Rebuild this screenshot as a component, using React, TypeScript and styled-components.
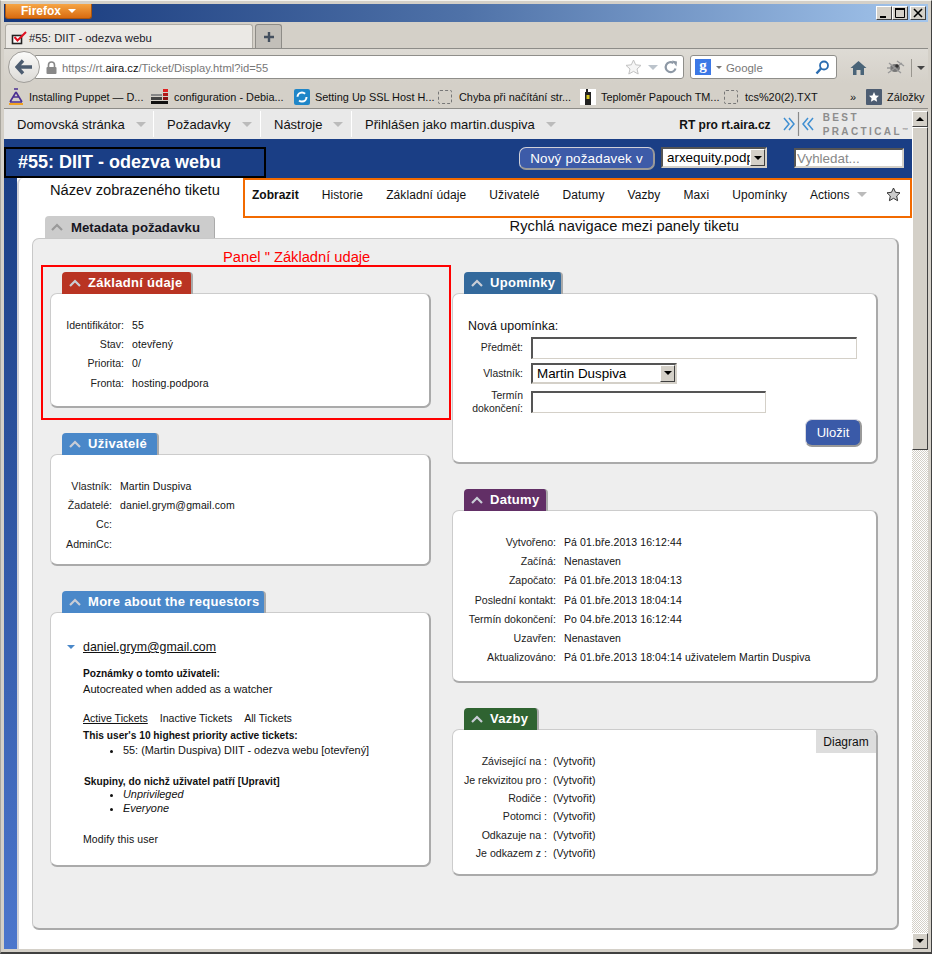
import React from 'react';
import styled, { createGlobalStyle } from 'styled-components';

const GlobalStyle = createGlobalStyle`
  html, body {
    margin: 0;
    padding: 0;
    overflow: hidden;
    background: #d4d0c8;
  }
  * {
    box-sizing: border-box;
  }
`;

const Window = styled.div`
  width: 932px;
  height: 954px;
  padding: 3px 3px 3px 3px;
  display: flex;
  flex-direction: column;
  background: #d4d0c8;
  border-right: 1px solid #404040;
  border-bottom: 2px solid #404040;
  border-top: 1px solid #f4f3ef;
  border-left: 1px solid #a9a69e;
  font-family: "Liberation Sans", Arial, sans-serif;
  color: #111;
  overflow: hidden;
`;

const TitleBar = styled.div`
  height: 18px;
  flex: none;
  display: flex;
  justify-content: space-between;
  background: linear-gradient(90deg, #16387c 0%, #4f72a8 50%, #a3c5ec 100%);
`;

const FirefoxButton = styled.div`
  width: 87px;
  height: 15px;
  margin-left: 1px;
  display: flex;
  align-items: center;
  justify-content: center;
  gap: 7px;
  color: #fff;
  font-size: 12px;
  font-weight: bold;
  background: linear-gradient(#f6a544, #d96b10);
  border: 1px solid #a9540f;
  border-top: none;
  border-radius: 0 0 3px 3px;
`;

const SmallArrow = styled.span<{ $color: string; $w?: number }>`
  display: inline-block;
  width: 0;
  height: 0;
  flex: none;
  border-left: ${(p) => p.$w || 4}px solid transparent;
  border-right: ${(p) => p.$w || 4}px solid transparent;
  border-top: ${(p) => p.$w || 4}px solid ${(p) => p.$color};
`;

const WindowButtons = styled.div`
  display: flex;
  margin-top: 2px;
  margin-right: 2px;
`;

const WindowButton = styled.div<{ $gap?: boolean }>`
  width: 16px;
  height: 14px;
  margin-left: ${(p) => (p.$gap ? 2 : 0)}px;
  background: #d4d0c8;
  border: 1px solid;
  border-color: #fff #404040 #404040 #fff;
  display: flex;
  align-items: center;
  justify-content: center;
`;

const TabStrip = styled.div`
  height: 26px;
  flex: none;
  display: flex;
  align-items: flex-end;
  padding-left: 1px;
  gap: 2px;
`;

const BrowserTab = styled.div`
  width: 248px;
  height: 24px;
  padding: 2px 0 0 5px;
  display: flex;
  align-items: center;
  font-size: 11.3px;
  color: #1b1b2b;
  background: #ebe9e5;
  border: 1px solid #b0ada6;
  border-bottom: none;
  border-radius: 3px 3px 0 0;
`;

const NewTab = styled.div`
  width: 27px;
  height: 24px;
  display: flex;
  align-items: center;
  justify-content: center;
  background: #c2bfb9;
  border: 1px solid #8e8c87;
  border-bottom: none;
  border-radius: 3px 3px 0 0;
`;

const NavBar = styled.div`
  height: 35px;
  flex: none;
  padding: 2px 0 0 4px;
  display: flex;
  align-items: flex-start;
  background: linear-gradient(#dedbd5, #d4d0c8);
  border-top: 1px solid #8d8c88;
`;

const BackButton = styled.div`
  width: 32px;
  height: 32px;
  margin-right: -5px;
  z-index: 1;
  flex: none;
  border-radius: 50%;
  background: linear-gradient(#fbfbfa, #dcdad6);
  border: 1px solid #a09e9a;
  display: flex;
  align-items: center;
  justify-content: center;
`;

const UrlBox = styled.div`
  width: 649px;
  height: 24px;
  margin-top: 4px;
  padding: 0 5px 0 10px;
  display: flex;
  align-items: center;
  background: #fff;
  border: 1px solid #8f8e8a;
  border-radius: 0 3px 3px 0;
  font-size: 11.2px;
  color: #777;
  flex: none;
`;

const UrlHost = styled.span`
  color: #111;
`;

const UrlText = styled.div`
  flex: 1;
  margin: 2px 0 0 5px;
`;

const UrlIcons = styled.div`
  display: flex;
  align-items: center;
  gap: 6px;
`;

const SearchBox = styled.div`
  width: 147px;
  height: 24px;
  margin-top: 4px;
  margin-left: 6px;
  flex: none;
  padding: 0 7px 0 4px;
  display: flex;
  align-items: center;
  background: #fff;
  border: 1px solid #8f8e8a;
  border-radius: 3px;
  font-size: 11.4px;
  color: #777;
`;

const GoogleIcon = styled.div`
  width: 16px;
  height: 16px;
  background: #3c78e6;
  color: #fff;
  font-family: "Liberation Serif", serif;
  font-weight: bold;
  font-size: 15px;
  line-height: 13px;
  text-align: center;
  margin-right: 5px;
`;

const SearchLabel = styled.div`
  flex: 1;
  margin: 2px 0 0 4px;
`;

const ToolIcons = styled.div`
  display: flex;
  align-items: center;
  margin-top: 5px;
  height: 24px;
`;

const ToolDivider = styled.div`
  width: 1px;
  height: 18px;
  margin: 0 5px 0 6px;
  background: #99968f;
`;

const Bookmarks = styled.div`
  height: 26px;
  flex: none;
  padding: 3px 0 0 4px;
  display: flex;
  align-items: center;
  font-size: 10.9px;
  color: #111;
  border-bottom: 1px solid #8d8c88;
`;

const Bookmark = styled.div<{ $width: number }>`
  width: ${(p) => p.$width}px;
  flex: none;
  display: flex;
  align-items: center;
  gap: 5px;
  white-space: nowrap;
`;

const DashedIcon = styled.span`
  width: 14px;
  height: 14px;
  margin-right: 2px;
  flex: none;
  border: 1px dashed #777;
  border-radius: 2px;
`;

const Chevrons = styled.div`
  margin-left: 31px;
  width: 16px;
  font-size: 11px;
`;

const Viewport = styled.div`
  flex: 1;
  min-height: 0;
  display: flex;
`;

const Page = styled.div`
  width: 908px;
  flex: none;
  display: flex;
  flex-direction: column;
  background: #fff;
`;

const Scrollbar = styled.div`
  width: 16px;
  flex: none;
  display: flex;
  flex-direction: column;
  border-top: 2px solid #d4d0c8;
  background: repeating-conic-gradient(#d4d0c8 0 25%, #fff 0 50%) 0 0 / 2px 2px;
`;

const ScrollButton = styled.div`
  height: 16px;
  flex: none;
  display: flex;
  align-items: center;
  justify-content: center;
  background: #d4d0c8;
  border: 1px solid;
  border-color: #fff #404040 #404040 #fff;
`;

const UpArrow = styled.span`
  width: 0;
  height: 0;
  border-left: 4px solid transparent;
  border-right: 4px solid transparent;
  border-bottom: 4px solid #000;
`;

const ScrollThumb = styled.div`
  height: 323px;
  flex: none;
  background: #d4d0c8;
  border: 1px solid;
  border-color: #fff #404040 #404040 #fff;
`;

const ScrollSpace = styled.div`
  flex: 1;
`;

const MenuBar = styled.div`
  height: 30px;
  flex: none;
  display: flex;
  align-items: center;
  background: #e9e9e9;
  font-size: 13px;
`;

const MenuItem = styled.div<{ $width: number }>`
  width: ${(p) => p.$width}px;
  height: 26px;
  flex: none;
  padding: 1px 0 0 13px;
  display: flex;
  align-items: center;
  gap: 11px;
  border-right: 1px solid #fff;
  white-space: nowrap;
  &:nth-child(4) {
    border-right: none;
  }
`;

const MenuSpacer = styled.div`
  flex: 1;
`;

const SiteName = styled.div`
  font-size: 12px;
  font-weight: bold;
  margin: 2px 12px 0 0;
`;

const LogoRow = styled.div`
  display: flex;
  align-items: center;
  margin-right: 4px;
`;

const LogoText = styled.div`
  margin-left: 8px;
  padding-top: 2px;
  font-size: 10px;
  line-height: 12px;
  letter-spacing: 2.4px;
  color: #8d8d8d;
  font-weight: bold;
  white-space: nowrap;
`;

const TradeMark = styled.span`
  font-size: 6px;
  letter-spacing: 0;
  vertical-align: 3px;
`;

const PageHeader = styled.div`
  height: 39px;
  flex: none;
  padding-top: 8px;
  display: flex;
  align-items: flex-start;
  background: #1a3e85;
`;

const TicketTitle = styled.h1`
  width: 262px;
  height: 31px;
  margin: 0;
  padding-left: 12px;
  flex: none;
  font-size: 18px;
  line-height: 27px;
  color: #fff;
  border: 2px solid #000;
  white-space: nowrap;
`;

const HeaderControls = styled.div`
  margin-left: 253px;
  display: flex;
  align-items: flex-start;
`;

const NewTicketButton = styled.div`
  width: 136px;
  height: 23px;
  display: flex;
  align-items: center;
  justify-content: center;
  color: #fff;
  font-size: 13.4px;
  letter-spacing: 0.2px;
  background: #3d5ba8;
  border: 1px solid #d0d0d8;
  border-right: 2px solid #999;
  border-bottom: 2px solid #999;
  border-radius: 7px;
`;

const FakeSelect = styled.div<{ $width: number; $size: number }>`
  width: ${(p) => p.$width}px;
  height: 21px;
  flex: none;
  padding-left: 4px;
  display: flex;
  align-items: center;
  justify-content: space-between;
  white-space: nowrap;
  background: #fff;
  font-size: ${(p) => p.$size}px;
  color: #000;
  border: 2px solid;
  border-color: #555 #d4d0c8 #d4d0c8 #555;
`;

const SelectText = styled.span`
  flex: 1;
  min-width: 0;
  overflow: hidden;
`;

const HeaderSelect = styled(FakeSelect)`
  margin-left: 6px;
`;

const SelectArrow = styled.span`
  width: 15px;
  height: 17px;
  flex: none;
  display: flex;
  align-items: center;
  justify-content: center;
  background: #d4d0c8;
  border: 1px solid;
  border-color: #fff #404040 #404040 #fff;
`;

const SearchInput = styled.input`
  width: 110px;
  height: 20px;
  margin: 1px 0 0 27px;
  padding: 0 1px;
  font-family: "Liberation Sans", Arial, sans-serif;
  font-size: 13.4px;
  background: #fff;
  border: 2px solid;
  border-color: #555 #d4d0c8 #d4d0c8 #555;
  outline: none;
  &::placeholder {
    color: #888;
    opacity: 1;
  }
`;

const BodyRow = styled.div`
  flex: 1;
  display: flex;
  min-height: 0;
`;

const BlueStrip = styled.div`
  width: 13px;
  flex: none;
  background: linear-gradient(#1a3e85, #4c76cc);
`;

const Sheet = styled.div`
  flex: 1;
  min-width: 0;
  background: #fff;
  border-left: 2px solid #d2d2d8;
  border-radius: 6px 0 0 0;
`;

const TopRow = styled.div`
  height: 40px;
  display: flex;
  align-items: flex-start;
  justify-content: space-between;
`;

const Caption = styled.div`
  font-size: 14.7px;
  line-height: 18px;
  color: #111;
  white-space: nowrap;
`;

const TitleCaption = styled(Caption)`
  margin: 3px 0 0 31px;
`;

const PanelNav = styled.nav`
  width: 669px;
  height: 40px;
  padding: 0 0 7px 7px;
  display: flex;
  align-items: center;
  gap: 23px;
  font-size: 12px;
  border: 2px solid #f26a00;
  white-space: nowrap;
`;

const NavLink = styled.span<{ $active?: boolean }>`
  font-weight: ${(p) => (p.$active ? 'bold' : 'normal')};
  letter-spacing: ${(p) => (p.$active ? 0 : 0.1)}px;
`;

const ActionsLink = styled.span`
  display: flex;
  align-items: center;
  gap: 8px;
  margin-right: -4px;
`;

const MetaHead = styled.div`
  height: 20px;
  display: flex;
  align-items: flex-end;
  justify-content: space-between;
`;

const MetaTab = styled.div`
  width: 170px;
  height: 22px;
  margin: 0 0 0 26px;
  padding-left: 6px;
  display: flex;
  align-items: center;
  gap: 8px;
  font-size: 13.2px;
  font-weight: bold;
  color: #15151f;
  background: #ccc;
  border-right: 1px solid #aaa;
  border-radius: 4px 4px 0 0;
  white-space: nowrap;
`;

const NavCaption = styled(Caption)`
  margin-right: 173px;
  margin-bottom: 3px;
`;

const MetaPanel = styled.div`
  width: 867px;
  margin-left: 13px;
  padding: 0 0 52px 8px;
  display: flex;
  gap: 1px;
  background: #eee;
  border: 1px solid #c8c8c8;
  border-right: 2px solid #aaa;
  border-bottom: 2px solid #aaa;
  border-radius: 7px;
`;

const LeftColumn = styled.div`
  width: 410px;
  flex: none;
  display: flex;
  flex-direction: column;
`;

const RightColumn = styled.div`
  width: 426px;
  flex: none;
  padding-top: 33px;
  display: flex;
  flex-direction: column;
  gap: 25px;
`;

const PanelCaption = styled(Caption)`
  height: 26px;
  padding: 9px 0 0 182px;
  color: #f00;
`;

const RedBox = styled.div`
  height: 155px;
  padding: 5px 18px 0 7px;
  border: 2px solid #f00;
`;

const LeftStack = styled.div`
  margin: 13px 0 0 9px;
  width: 381px;
  display: flex;
  flex-direction: column;
  gap: 25px;
`;

const WidgetTab = styled.div<{ $color: string; $width: number }>`
  position: relative;
  z-index: 1;
  width: ${(p) => p.$width}px;
  height: 22px;
  margin-left: 12px;
  padding: 0 0 1px 7px;
  display: flex;
  align-items: center;
  gap: 7px;
  color: #fff;
  font-size: 13px;
  font-weight: bold;
  letter-spacing: 0.3px;
  white-space: nowrap;
  background: ${(p) => p.$color};
  border-right: 2px solid #aaa;
  border-radius: 4px 4px 0 0;
`;

const WidgetBox = styled.div<{ $height: number }>`
  position: relative;
  height: ${(p) => p.$height}px;
  margin-top: -1px;
  background: #fff;
  border: 1px solid #ccc;
  border-right: 2px solid #aaa;
  border-bottom: 2px solid #aaa;
  border-radius: 7px;
`;

const FieldGrid = styled.div<{ $label: number; $gap: number; $top: number; $pitch: number }>`
  padding-top: ${(p) => p.$top}px;
  display: grid;
  grid-template-columns: ${(p) => p.$label}px auto;
  column-gap: ${(p) => p.$gap}px;
  grid-auto-rows: ${(p) => p.$pitch}px;
  align-items: center;
  justify-content: start;
`;

const FieldLabel = styled.div`
  text-align: right;
  font-size: 10.6px;
  color: #222;
  white-space: nowrap;
`;

const FieldValue = styled.div`
  font-size: 10.5px;
  letter-spacing: 0.1px;
  color: #111;
  white-space: nowrap;
`;

const ReminderBody = styled.div`
  padding: 24px 0 0 15px;
`;

const ReminderTitle = styled.div`
  font-size: 12.4px;
  line-height: 16px;
  margin-bottom: 1px;
`;

const ReminderRow = styled.div<{ $height: number }>`
  height: ${(p) => p.$height}px;
  display: flex;
  align-items: center;
`;

const ReminderLabel = styled.div`
  width: 55px;
  margin-right: 8px;
  flex: none;
  text-align: right;
  font-size: 10.4px;
  line-height: 13px;
  color: #222;
`;

const TextField = styled.input<{ $width: number }>`
  width: ${(p) => p.$width}px;
  height: 22px;
  padding: 0;
  background: #fff;
  border: 2px solid;
  border-color: #555 #d4d0c8 #d4d0c8 #555;
  border-right-width: 1px;
  border-bottom-width: 1px;
  outline: none;
`;

const SaveRow = styled.div`
  margin: 2px 14px 0 0;
  display: flex;
  justify-content: flex-end;
`;

const SaveButton = styled.div`
  width: 57px;
  height: 28px;
  display: flex;
  align-items: center;
  justify-content: center;
  color: #fff;
  font-size: 13px;
  background: #3a5aa8;
  border: 1px solid #d8d8e0;
  border-right: 2px solid #999;
  border-bottom: 2px solid #999;
  border-radius: 7px;
`;

const DiagramTab = styled.div`
  position: absolute;
  top: 0;
  right: 0;
  width: 60px;
  height: 23px;
  display: flex;
  align-items: center;
  justify-content: center;
  font-size: 12px;
  background: #ddd;
  border-radius: 0 6px 0 0;
`;

const RequestorBody = styled.div`
  position: relative;
  padding: 26px 0 0 32px;
`;

const ToggleMark = styled.span`
  position: absolute;
  left: 16px;
  top: 22px;
`;

const RequestorLink = styled.a`
  display: block;
  font-size: 12.4px;
  line-height: 16px;
  color: #111;
  text-decoration: underline;
  margin-bottom: 11px;
`;

const SmallBold = styled.div<{ $left?: number }>`
  font-size: 10.2px;
  font-weight: bold;
  line-height: 15px;
  color: #111;
  margin-left: ${(p) => p.$left || 0}px;
`;

const SmallText = styled.div`
  font-size: 11.1px;
  line-height: 16px;
  color: #111;
  margin-bottom: 13px;
`;

const TicketTabs = styled.div`
  display: flex;
  gap: 12px;
  font-size: 10.6px;
  line-height: 16px;
  margin-bottom: 2px;
`;

const TicketTab = styled.span<{ $active?: boolean }>`
  text-decoration: ${(p) => (p.$active ? 'underline' : 'none')};
`;

const BulletList = styled.ul<{ $before: number; $after: number }>`
  margin: ${(p) => p.$before}px 0 ${(p) => p.$after}px;
  padding-left: 40px;
  font-size: 10.9px;
  line-height: 14px;
`;

const GroupItem = styled.li`
  font-style: italic;
`;

const Chevron = ({ color = '#c9cdd6' }: { color?: string }) => (
  <svg width="12" height="8" viewBox="0 0 12 8" style={{ flex: 'none' }}>
    <path d="M1 7 L6 2 L11 7" fill="none" stroke={color} strokeWidth="2.2" />
  </svg>
);

const Widget = ({
  title,
  color,
  tabWidth,
  height,
  children,
}: {
  title: string;
  color: string;
  tabWidth: number;
  height: number;
  children: React.ReactNode;
}) => (
  <section>
    <WidgetTab $color={color} $width={tabWidth}>
      <Chevron />
      {title}
    </WidgetTab>
    <WidgetBox $height={height}>{children}</WidgetBox>
  </section>
);

const Fields = ({
  rows,
  label,
  gap = 8,
  top = 21,
  pitch = 19.3,
}: {
  rows: string[][];
  label: number;
  gap?: number;
  top?: number;
  pitch?: number;
}) => (
  <FieldGrid $label={label} $gap={gap} $top={top} $pitch={pitch}>
    {rows.map(([name, value]) => (
      <React.Fragment key={name}>
        <FieldLabel>{name}</FieldLabel>
        <FieldValue>{value}</FieldValue>
      </React.Fragment>
    ))}
  </FieldGrid>
);

const CheckIcon = () => (
  <svg width="18" height="16" viewBox="0 0 18 16" style={{ flex: 'none' }}>
    <rect x="1.5" y="5.5" width="9" height="8" fill="#fff" stroke="#222" strokeWidth="1.6" />
    <path d="M3.5 7 L6.5 10.5 L15 2" fill="none" stroke="#e01020" strokeWidth="2" />
  </svg>
);

const PuppetIcon = () => (
  <svg width="16" height="18" viewBox="0 0 16 18" style={{ flex: 'none' }}>
    <path d="M8 4 L2 14 M8 4 L14 14 M2 14 L14 14 M5 9 L11 9" stroke="#4b2f92" strokeWidth="1.6" fill="none" />
    <path d="M6 1 H10" stroke="#4b2f92" strokeWidth="1.5" />
    <path d="M1 16 H15" stroke="#f0a020" strokeWidth="2" />
  </svg>
);

const StackIcon = () => (
  <svg width="18" height="16" viewBox="0 0 18 16" style={{ flex: 'none' }}>
    <rect x="0" y="12" width="17" height="3" fill="#111" />
    <rect x="0" y="8" width="11" height="3" fill="#444" />
    <rect x="12" y="8" width="5" height="3" fill="#8a1010" />
    <rect x="0" y="5" width="11" height="2" fill="#888" />
    <rect x="12" y="4" width="5" height="3" fill="#b01818" />
    <rect x="12" y="0" width="5" height="3" fill="#e02020" />
  </svg>
);

const SwirlIcon = () => (
  <svg width="16" height="16" viewBox="0 0 16 16" style={{ flex: 'none' }}>
    <rect width="16" height="16" rx="2" fill="#1f86c8" />
    <circle cx="8" cy="8" r="4.5" fill="none" stroke="#fff" strokeWidth="2" strokeDasharray="10 4" />
  </svg>
);

const DeviceIcon = () => (
  <svg width="16" height="16" viewBox="0 0 16 16" style={{ flex: 'none' }}>
    <rect width="16" height="16" fill="#fff" />
    <rect x="5" y="3" width="6" height="13" fill="#222" />
    <rect x="6" y="0" width="2" height="4" fill="#222" />
    <rect x="6.5" y="6" width="3" height="4" fill="#d8c820" />
  </svg>
);

const BookmarksStar = () => (
  <svg width="16" height="16" viewBox="0 0 16 16" style={{ flex: 'none' }}>
    <rect width="16" height="16" rx="1" fill="#4d5d72" />
    <path d="M8 3 L9.5 6.4 L13 6.8 L10.4 9.2 L11.1 12.8 L8 11 L4.9 12.8 L5.6 9.2 L3 6.8 L6.5 6.4 Z" fill="#fff" />
  </svg>
);

const menuItems = [
  { label: 'Domovská stránka', width: 150 },
  { label: 'Požadavky', width: 107 },
  { label: 'Nástroje', width: 91 },
  { label: 'Přihlášen jako martin.duspiva', width: 214 },
];

const navLinks = ['Historie', 'Základní údaje', 'Uživatelé', 'Datumy', 'Vazby', 'Maxi', 'Upomínky'];

const bookmarks = [
  { text: 'Installing Puppet — D...', icon: <PuppetIcon />, width: 143 },
  { text: 'configuration - Debia...', icon: <StackIcon />, width: 143 },
  { text: 'Setting Up SSL Host H...', icon: <SwirlIcon />, width: 144 },
  { text: 'Chyba při načítání str...', icon: <DashedIcon />, width: 142 },
  { text: 'Teploměr Papouch TM...', icon: <DeviceIcon />, width: 144 },
  { text: 'tcs%20(2).TXT', icon: <DashedIcon />, width: 95 },
];

const basicRows = [
  ['Identifikátor:', '55'],
  ['Stav:', 'otevřený'],
  ['Priorita:', '0/'],
  ['Fronta:', 'hosting.podpora'],
];

const peopleRows = [
  ['Vlastník:', 'Martin Duspiva'],
  ['Žadatelé:', 'daniel.grym@gmail.com'],
  ['Cc:', ''],
  ['AdminCc:', ''],
];

const dateRows = [
  ['Vytvořeno:', 'Pá 01.bře.2013 16:12:44'],
  ['Začíná:', 'Nenastaven'],
  ['Započato:', 'Pá 01.bře.2013 18:04:13'],
  ['Poslední kontakt:', 'Pá 01.bře.2013 18:04:14'],
  ['Termín dokončení:', 'Po 04.bře.2013 16:12:44'],
  ['Uzavřen:', 'Nenastaven'],
  ['Aktualizováno:', 'Pá 01.bře.2013 18:04:14 uživatelem Martin Duspiva'],
];

const linkRows = [
  ['Závisející na :', '(Vytvořit)'],
  ['Je rekvizitou pro :', '(Vytvořit)'],
  ['Rodiče :', '(Vytvořit)'],
  ['Potomci :', '(Vytvořit)'],
  ['Odkazuje na :', '(Vytvořit)'],
  ['Je odkazem z :', '(Vytvořit)'],
];

const BrowserChrome = () => (
  <>
    <TitleBar>
      <FirefoxButton>
        Firefox
        <SmallArrow $color="#fff" />
      </FirefoxButton>
      <WindowButtons>
        <WindowButton>
          <svg width="10" height="10" viewBox="0 0 10 10"><path d="M1 9 H7" stroke="#000" strokeWidth="2" /></svg>
        </WindowButton>
        <WindowButton>
          <svg width="10" height="10" viewBox="0 0 10 10"><path d="M0.5 1 H9.5 V9.5 H0.5 Z" fill="none" stroke="#000" /><path d="M0 1 H10" stroke="#000" strokeWidth="2" /></svg>
        </WindowButton>
        <WindowButton $gap>
          <svg width="10" height="10" viewBox="0 0 10 10"><path d="M1 1 L9 9 M9 1 L1 9" stroke="#000" strokeWidth="1.6" /></svg>
        </WindowButton>
      </WindowButtons>
    </TitleBar>
    <TabStrip>
      <BrowserTab>
        <CheckIcon />
        #55: DIIT - odezva webu
      </BrowserTab>
      <NewTab>
        <svg width="12" height="12" viewBox="0 0 12 12"><path d="M6 1 V11 M1 6 H11" stroke="#44505f" strokeWidth="2.4" /></svg>
      </NewTab>
    </TabStrip>
    <NavBar>
      <BackButton>
        <svg width="18" height="16" viewBox="0 0 18 16">
          <path d="M8 1.5 L2 8 L8 14.5 M2.5 8 H17" fill="none" stroke="#4c5c70" strokeWidth="3.4" />
        </svg>
      </BackButton>
      <UrlBox>
        <svg width="11" height="13" viewBox="0 0 11 13" style={{ flex: 'none' }}>
          <path d="M2.5 6 V4 a3 3 0 0 1 6 0 V6" fill="none" stroke="#888" strokeWidth="1.6" />
          <rect x="0.5" y="6" width="10" height="7" rx="1" fill="#888" />
        </svg>
        <UrlText>
          https://rt.<UrlHost>aira.cz</UrlHost>/Ticket/Display.html?id=55
        </UrlText>
        <UrlIcons>
          <svg width="17" height="16" viewBox="0 0 17 16">
            <path d="M8.5 1 L10.7 5.8 L16 6.4 L12 10 L13.2 15 L8.5 12.4 L3.8 15 L5 10 L1 6.4 L6.3 5.8 Z" fill="#f5f5f5" stroke="#c2c2c2" />
          </svg>
          <SmallArrow $color="#bcc4cc" $w={5} />
          <svg width="14" height="14" viewBox="0 0 14 14">
            <path d="M11.5 8.5 A5 5 0 1 1 9.5 3" fill="none" stroke="#8d98a5" strokeWidth="2.2" />
            <path d="M8 0.5 L13 1.5 L12.5 6.5 Z" fill="#8d98a5" />
          </svg>
        </UrlIcons>
      </UrlBox>
      <SearchBox>
        <GoogleIcon>g</GoogleIcon>
        <SmallArrow $color="#777" $w={3} />
        <SearchLabel>Google</SearchLabel>
        <svg width="14" height="15" viewBox="0 0 14 15">
          <circle cx="9" cy="5.5" r="4" fill="none" stroke="#2a6cb0" strokeWidth="1.8" />
          <path d="M6 8.5 L1.5 13.5" stroke="#2a6cb0" strokeWidth="2.4" />
        </svg>
      </SearchBox>
      <ToolIcons>
        <svg width="17" height="16" viewBox="0 0 17 16" style={{ margin: '0 19px 0 13px' }}>
          <path d="M8.5 1 L16.5 8 H14 V15 H10.5 V10 H6.5 V15 H3 V8 H0.5 Z" fill="#4a6478" />
        </svg>
        <svg width="19" height="16" viewBox="0 0 19 16">
          <ellipse cx="9" cy="8" rx="5" ry="4" fill="#777" />
          <path d="M2 13 L16 3 M3 3 L15 13 M11 1 L18 6 M1 8 H5" stroke="#999" strokeWidth="1.4" />
          <circle cx="11" cy="6" r="1.8" fill="#333" />
        </svg>
        <ToolDivider />
        <SmallArrow $color="#444" />
      </ToolIcons>
    </NavBar>
    <Bookmarks>
      {bookmarks.map((b) => (
        <Bookmark key={b.text} $width={b.width}>
          {b.icon}
          {b.text}
        </Bookmark>
      ))}
      <Chevrons>»</Chevrons>
      <Bookmark $width={58}>
        <BookmarksStar />
        Záložky
      </Bookmark>
    </Bookmarks>
  </>
);

const App = () => {
  return (
    <Window>
      <GlobalStyle />
      <BrowserChrome />
      <Viewport>
        <Page>
          <MenuBar>
            {menuItems.map((m) => (
              <MenuItem key={m.label} $width={m.width}>
                {m.label}
                <SmallArrow $color="#bbb" $w={5} />
              </MenuItem>
            ))}
            <MenuSpacer />
            <SiteName>RT pro rt.aira.cz</SiteName>
            <LogoRow>
              <svg width="32" height="26" viewBox="0 0 32 26">
                <path d="M1 7 L6 13 L1 19 M6 7 L11 13 L6 19" fill="none" stroke="#3f8fd2" strokeWidth="1.5" />
                <path d="M15.5 1 V25" stroke="#8a8a8a" strokeWidth="1.2" />
                <path d="M25 7 L20 13 L25 19 M30 7 L25 13 L30 19" fill="none" stroke="#3f8fd2" strokeWidth="1.5" />
              </svg>
              <LogoText>
                BEST
                <br />
                PRACTICAL<TradeMark>™</TradeMark>
              </LogoText>
            </LogoRow>
          </MenuBar>
          <PageHeader>
            <TicketTitle>#55: DIIT - odezva webu</TicketTitle>
            <HeaderControls>
              <NewTicketButton>Nový požadavek v</NewTicketButton>
              <HeaderSelect $width={106} $size={13.4}>
                <SelectText>arxequity.podpora</SelectText>
                <SelectArrow>
                  <SmallArrow $color="#000" />
                </SelectArrow>
              </HeaderSelect>
              <SearchInput placeholder="Vyhledat..." readOnly />
            </HeaderControls>
          </PageHeader>
          <BodyRow>
            <BlueStrip />
            <Sheet>
              <TopRow>
                <TitleCaption>Název zobrazeného tiketu</TitleCaption>
                <PanelNav>
                  <NavLink $active>Zobrazit</NavLink>
                  {navLinks.map((l) => (
                    <NavLink key={l}>{l}</NavLink>
                  ))}
                  <ActionsLink>
                    Actions
                    <SmallArrow $color="#bbb" $w={5} />
                  </ActionsLink>
                  <svg width="15" height="15" viewBox="0 0 15 15">
                    <path d="M7.5 1 L9.5 5.3 L14 5.8 L10.7 9 L11.6 13.7 L7.5 11.3 L3.4 13.7 L4.3 9 L1 5.8 L5.5 5.3 Z" fill="#ccc" stroke="#333" />
                  </svg>
                </PanelNav>
              </TopRow>
              <MetaHead>
                <MetaTab>
                  <Chevron color="#999" />
                  Metadata požadavku
                </MetaTab>
                <NavCaption>Rychlá navigace mezi panely tiketu</NavCaption>
              </MetaHead>
              <MetaPanel>
                <LeftColumn>
                  <PanelCaption>Panel " Základní udaje</PanelCaption>
                  <RedBox>
                    <Widget title="Základní údaje" color="#b93423" tabWidth={131} height={115}>
                      <Fields rows={basicRows} label={73} />
                    </Widget>
                  </RedBox>
                  <LeftStack>
                    <Widget title="Uživatelé" color="#4a88c9" tabWidth={97} height={112}>
                      <Fields rows={peopleRows} label={61} />
                    </Widget>
                    <Widget title="More about the requestors" color="#4a88c9" tabWidth={204} height={255}>
                      <RequestorBody>
                        <ToggleMark>
                          <SmallArrow $color="#4a88c9" />
                        </ToggleMark>
                        <RequestorLink>daniel.grym@gmail.com</RequestorLink>
                        <SmallBold>Poznámky o tomto uživateli:</SmallBold>
                        <SmallText>Autocreated when added as a watcher</SmallText>
                        <TicketTabs>
                          <TicketTab $active>Active Tickets</TicketTab>
                          <TicketTab>Inactive Tickets</TicketTab>
                          <TicketTab>All Tickets</TicketTab>
                        </TicketTabs>
                        <SmallBold>This user's 10 highest priority active tickets:</SmallBold>
                        <BulletList $before={0} $after={17}>
                          <li>55: (Martin Duspiva) DIIT - odezva webu [otevřený]</li>
                        </BulletList>
                        <SmallBold $left={1}>Skupiny, do nichž uživatel patří [Upravit]</SmallBold>
                        <BulletList $before={-2} $after={18}>
                          <GroupItem>Unprivileged</GroupItem>
                          <GroupItem>Everyone</GroupItem>
                        </BulletList>
                        <FieldValue>Modify this user</FieldValue>
                      </RequestorBody>
                    </Widget>
                  </LeftStack>
                </LeftColumn>
                <RightColumn>
                  <Widget title="Upomínky" color="#33699c" tabWidth={99} height={171}>
                    <ReminderBody>
                      <ReminderTitle>Nová upomínka:</ReminderTitle>
                      <ReminderRow $height={25}>
                        <ReminderLabel>Předmět:</ReminderLabel>
                        <TextField $width={326} readOnly />
                      </ReminderRow>
                      <ReminderRow $height={26}>
                        <ReminderLabel>Vlastník:</ReminderLabel>
                        <FakeSelect $width={146} $size={13.4}>
                          <SelectText>Martin Duspiva</SelectText>
                          <SelectArrow>
                            <SmallArrow $color="#000" />
                          </SelectArrow>
                        </FakeSelect>
                      </ReminderRow>
                      <ReminderRow $height={31}>
                        <ReminderLabel>Termín dokončení:</ReminderLabel>
                        <TextField $width={235} readOnly />
                      </ReminderRow>
                      <SaveRow>
                        <SaveButton>Uložit</SaveButton>
                      </SaveRow>
                    </ReminderBody>
                  </Widget>
                  <Widget title="Datumy" color="#622f66" tabWidth={84} height={173}>
                    <Fields rows={dateRows} label={103} />
                  </Widget>
                  <Widget title="Vazby" color="#2f6331" tabWidth={75} height={147}>
                    <DiagramTab>Diagram</DiagramTab>
                    <Fields rows={linkRows} label={94} gap={6} top={22} pitch={18.4} />
                  </Widget>
                </RightColumn>
              </MetaPanel>
            </Sheet>
          </BodyRow>
        </Page>
        <Scrollbar>
          <ScrollButton>
            <UpArrow />
          </ScrollButton>
          <ScrollThumb />
          <ScrollSpace />
          <ScrollButton>
            <SmallArrow $color="#000" />
          </ScrollButton>
        </Scrollbar>
      </Viewport>
    </Window>
  );
};

export default App;
